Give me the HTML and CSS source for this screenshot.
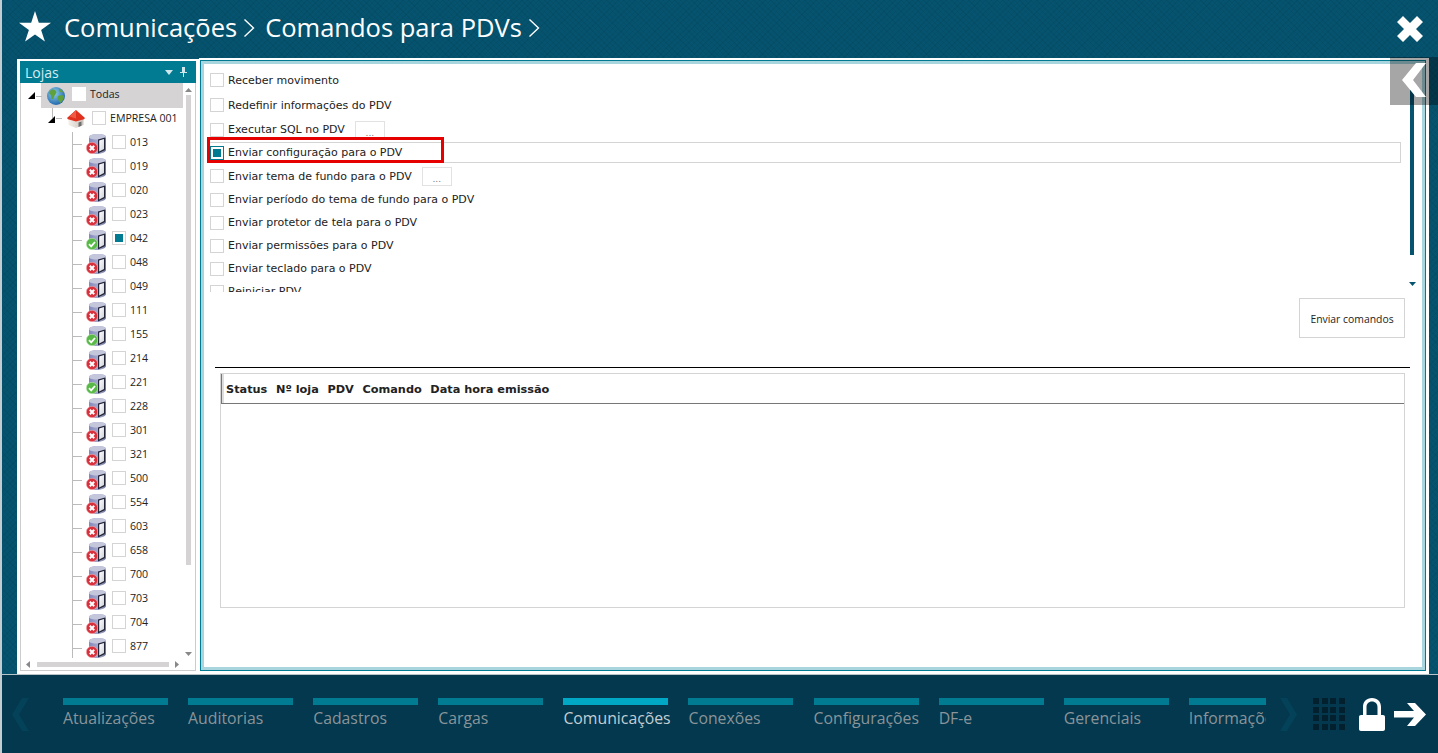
FILE: index.html
```html
<!DOCTYPE html>
<html lang="pt-BR">
<head>
  <meta charset="UTF-8">
  <title>Comandos para PDVs</title>
  <link rel="stylesheet" href="styles.css">
</head>
<body>
  <svg class="defs" width="0" height="0">
    <defs>
      <linearGradient id="srv" x1="0" x2="1" y1="0" y2="0">
        <stop offset="0" stop-color="#8388bd"/>
        <stop offset="0.6" stop-color="#a9add0"/>
        <stop offset="1" stop-color="#6d7296"/>
      </linearGradient>
      <linearGradient id="srv-front" x1="0" x2="1" y1="0" y2="1">
        <stop offset="0" stop-color="#fff"/>
        <stop offset="1" stop-color="#cfd2d8"/>
      </linearGradient>
      <linearGradient id="wall" x1="0" x2="1" y1="0" y2="0">
        <stop offset="0" stop-color="#f4efe9"/>
        <stop offset="1" stop-color="#c9c4be"/>
      </linearGradient>
      <radialGradient id="globe" cx="0.4" cy="0.35" r="0.7">
        <stop offset="0" stop-color="#8fd0ee"/>
        <stop offset="1" stop-color="#1c62a8"/>
      </radialGradient>
      <symbol id="server" viewBox="0 0 20 20">
        <path d="M3 3c0-2 5-3 9-3s8 1 8 3v13c0 2-5 4-9 4s-8-2-8-4z" fill="url(#srv)"/>
        <path d="M3 3c0-2 5-3 9-3s8 1 8 3c0 1-3 2-8 2.500S3 4.500 3 3z" fill="#c4c7dc"/>
        <path d="M12 5.500l7-2V16l-7 3.500z" fill="#23263a"/>
        <path d="M13.200 6.500l4.800-1.400V15l-4.800 2.500z" fill="url(#srv-front)"/>
      </symbol>
      <symbol id="bad" viewBox="0 0 12 12">
        <circle cx="6" cy="6" r="5.700" fill="#d8303c" stroke="#f4b0b0" stroke-width="0.6"/>
        <path d="M3.800 3.800l4.400 4.400M8.200 3.800l-4.400 4.400" stroke="#fff" stroke-width="2"/>
      </symbol>
      <symbol id="good" viewBox="0 0 12 12">
        <circle cx="6" cy="6" r="5.700" fill="#58b848" stroke="#bfe6b0" stroke-width="0.6"/>
        <path d="M3 6.200l2.200 2.200 3.800-4.400" stroke="#fff" stroke-width="1.800" fill="none"/>
      </symbol>
    </defs>
  </svg>

  <!-- Header -->
  <header class="header">
    <svg class="star" viewBox="0 0 32 32"><path d="M16 0l3.800 11.700H32l-9.900 7.200 3.800 11.700L16 23.400 6.100 30.600l3.800-11.700L0 11.700h12.200z" fill="#fff"/></svg>
    <span class="crumb">Comunicações</span>
    <svg class="crumb-sep" viewBox="0 0 12 20"><path d="M1.500 1.500L10.500 10 1.500 18.500" fill="none" stroke="#fff" stroke-width="1.400"/></svg>
    <span class="crumb">Comandos para PDVs</span>
    <svg class="crumb-sep" viewBox="0 0 12 20"><path d="M1.500 1.500L10.500 10 1.500 18.500" fill="none" stroke="#fff" stroke-width="1.400"/></svg>
    <svg class="close" viewBox="0 0 26 26"><path d="M6 0l7 7 7-7 6 6-7 7 7 7-6 6-7-7-7 7-6-6 7-7-7-7z" fill="#fff"/></svg>
  </header>

  <!-- Main -->
  <main class="main">
    <aside class="side">
      <div class="side-inner">
        <div class="side-title">
          <span>Lojas</span>
          <span class="side-tools">
            <svg width="8" height="5" viewBox="0 0 8 5"><path d="M0 0h8L4 5z" fill="#cfe6ec"/></svg>
            <svg width="7" height="10" viewBox="0 0 7 10"><path d="M2 0h3v5h2v1H4v4H3V6H0V5h2z" fill="#cfe6ec"/></svg>
          </span>
        </div>
        <div class="tree-wrap">
          <div class="tree">
            <div class="node root">
              <span class="tri"></span>
              <span class="root-bg">
                <svg class="globe" viewBox="0 0 18 18"><circle cx="9" cy="9" r="9" fill="url(#globe)"/><path d="M4 3c2-1 4 0 5 1s0 3-1 4-1 3-2 4-2-1-2-3-2-2-2-3 1-2 2-3zM11 9c2-1 5-1 6 0 0 3-2 6-4 7-1-2-3-5-2-7zM12 2c2 0 3 1 4 3-1 1-3 0-4-1z" fill="#5fa23c"/></svg>
                <span class="cb plain"></span>
                <span class="label">Todas</span>
              </span>
            </div>
            <div class="node company">
              <span class="tri"></span>
              <svg class="house" viewBox="0 0 18 18"><path d="M1.500 8v7L9 18l7.500-3V8z" fill="url(#wall)"/><path d="M11.500 12.500l3-1v4.300l-3 1.200z" fill="#6f6f6f"/><path d="M9 0L0 8l1 1.200 8 2.300 8-2.300L18 8z" fill="#e0301e"/><path d="M9 0L2.500 6.500 9 8.500z" fill="#ee5a44"/></svg>
              <span class="cb"></span>
              <span class="label">EMPRESA 001</span>
            </div>
            <div class="stores">
              <div class="node store"><svg class="srv"><use href="#server"/></svg><svg class="st"><use href="#bad"/></svg><span class="cb"></span><span class="label">013</span></div>
              <div class="node store"><svg class="srv"><use href="#server"/></svg><svg class="st"><use href="#bad"/></svg><span class="cb"></span><span class="label">019</span></div>
              <div class="node store"><svg class="srv"><use href="#server"/></svg><svg class="st"><use href="#bad"/></svg><span class="cb"></span><span class="label">020</span></div>
              <div class="node store"><svg class="srv"><use href="#server"/></svg><svg class="st"><use href="#bad"/></svg><span class="cb"></span><span class="label">023</span></div>
              <div class="node store"><svg class="srv"><use href="#server"/></svg><svg class="st"><use href="#good"/></svg><span class="cb on"></span><span class="label">042</span></div>
              <div class="node store"><svg class="srv"><use href="#server"/></svg><svg class="st"><use href="#bad"/></svg><span class="cb"></span><span class="label">048</span></div>
              <div class="node store"><svg class="srv"><use href="#server"/></svg><svg class="st"><use href="#bad"/></svg><span class="cb"></span><span class="label">049</span></div>
              <div class="node store"><svg class="srv"><use href="#server"/></svg><svg class="st"><use href="#bad"/></svg><span class="cb"></span><span class="label">111</span></div>
              <div class="node store"><svg class="srv"><use href="#server"/></svg><svg class="st"><use href="#good"/></svg><span class="cb"></span><span class="label">155</span></div>
              <div class="node store"><svg class="srv"><use href="#server"/></svg><svg class="st"><use href="#bad"/></svg><span class="cb"></span><span class="label">214</span></div>
              <div class="node store"><svg class="srv"><use href="#server"/></svg><svg class="st"><use href="#good"/></svg><span class="cb"></span><span class="label">221</span></div>
              <div class="node store"><svg class="srv"><use href="#server"/></svg><svg class="st"><use href="#bad"/></svg><span class="cb"></span><span class="label">228</span></div>
              <div class="node store"><svg class="srv"><use href="#server"/></svg><svg class="st"><use href="#bad"/></svg><span class="cb"></span><span class="label">301</span></div>
              <div class="node store"><svg class="srv"><use href="#server"/></svg><svg class="st"><use href="#bad"/></svg><span class="cb"></span><span class="label">321</span></div>
              <div class="node store"><svg class="srv"><use href="#server"/></svg><svg class="st"><use href="#bad"/></svg><span class="cb"></span><span class="label">500</span></div>
              <div class="node store"><svg class="srv"><use href="#server"/></svg><svg class="st"><use href="#bad"/></svg><span class="cb"></span><span class="label">554</span></div>
              <div class="node store"><svg class="srv"><use href="#server"/></svg><svg class="st"><use href="#bad"/></svg><span class="cb"></span><span class="label">603</span></div>
              <div class="node store"><svg class="srv"><use href="#server"/></svg><svg class="st"><use href="#bad"/></svg><span class="cb"></span><span class="label">658</span></div>
              <div class="node store"><svg class="srv"><use href="#server"/></svg><svg class="st"><use href="#bad"/></svg><span class="cb"></span><span class="label">700</span></div>
              <div class="node store"><svg class="srv"><use href="#server"/></svg><svg class="st"><use href="#bad"/></svg><span class="cb"></span><span class="label">703</span></div>
              <div class="node store"><svg class="srv"><use href="#server"/></svg><svg class="st"><use href="#bad"/></svg><span class="cb"></span><span class="label">704</span></div>
              <div class="node store"><svg class="srv"><use href="#server"/></svg><svg class="st"><use href="#bad"/></svg><span class="cb"></span><span class="label">877</span></div>
            </div>
          </div>
          <div class="vscroll">
            <svg width="7" height="4" viewBox="0 0 7 4"><path d="M0 4h7L3.500 0z" fill="#888"/></svg>
            <div class="vthumb"></div>
            <svg width="7" height="4" viewBox="0 0 7 4"><path d="M0 0h7L3.500 4z" fill="#888"/></svg>
          </div>
        </div>
        <div class="hscroll">
          <svg width="4" height="7" viewBox="0 0 4 7"><path d="M4 0v7L0 3.500z" fill="#888"/></svg>
          <div class="hthumb"></div>
          <svg width="4" height="7" viewBox="0 0 4 7"><path d="M0 0v7l4-3.500z" fill="#888"/></svg>
        </div>
      </div>
    </aside>

    <section class="content">
      <div class="content-inner">
        <div class="commands-wrap">
          <div class="commands">
            <div class="cmd h24"><span class="cb"></span><span>Receber movimento</span></div>
            <div class="cmd h26"><span class="cb"></span><span>Redefinir informações do PDV</span></div>
            <div class="cmd"><span class="cb"></span><span>Executar SQL no PDV</span><button class="dots dots-sql">...</button></div>
            <div class="cmd focused"><span class="cb on"></span><span>Enviar configuração para o PDV</span></div>
            <div class="cmd h24"><span class="cb"></span><span>Enviar tema de fundo para o PDV</span><button class="dots">...</button></div>
            <div class="cmd"><span class="cb"></span><span>Enviar período do tema de fundo para o PDV</span></div>
            <div class="cmd"><span class="cb"></span><span>Enviar protetor de tela para o PDV</span></div>
            <div class="cmd"><span class="cb"></span><span>Enviar permissões para o PDV</span></div>
            <div class="cmd"><span class="cb"></span><span>Enviar teclado para o PDV</span></div>
            <div class="cmd"><span class="cb"></span><span>Reiniciar PDV</span></div>
          </div>
          <div class="cmd-scroll">
            <div class="cmd-thumb"></div>
            <svg width="7" height="4" viewBox="0 0 7 4"><path d="M0 0h7L3.500 4z" fill="#05536f"/></svg>
          </div>
        </div>
        <div class="send-row"><button class="send">Enviar comandos</button></div>
        <hr class="rule">
        <div class="grid">
          <div class="grid-head">
            <span>Status</span><span>Nº loja</span><span>PDV</span><span>Comando</span><span>Data hora emissão</span>
          </div>
        </div>
      </div>
    </section>

    <!-- Collapse tab over the corner -->
    <button class="collapse">
      <svg viewBox="0 0 26 34"><path d="M25 0h-10L1 17l14 17h10L12 17z" fill="#fff"/></svg>
    </button>
    <!-- Annotation -->
    <div class="highlight"></div>
  </main>

  <!-- Bottom menu -->
  <footer class="footer">
    <svg class="nav-arrow" viewBox="0 0 17 33"><path d="M17 0H10L0 16.500 10 33h7L7 16.500z" fill="#044259"/></svg>
    <nav class="menu">
      <a class="menu-item">Atualizações</a>
      <a class="menu-item">Auditorias</a>
      <a class="menu-item">Cadastros</a>
      <a class="menu-item">Cargas</a>
      <a class="menu-item active">Comunicações</a>
      <a class="menu-item">Conexões</a>
      <a class="menu-item">Configurações</a>
      <a class="menu-item">DF-e</a>
      <a class="menu-item">Gerenciais</a>
      <a class="menu-item">Informações</a>
    </nav>
    <svg class="nav-arrow next" viewBox="0 0 17 33"><path d="M0 0h7l10 16.500L7 33H0l10-16.500z" fill="#044259"/></svg>
    <div class="apps">
      <i></i><i></i><i></i><i></i><i></i><i></i><i></i><i></i><i></i><i></i><i></i><i></i><i></i><i></i><i></i><i></i>
    </div>
    <svg class="lock" viewBox="0 0 26 33"><path d="M13 0c5.500 0 9 3.500 9 9v8h2c1.200 0 2 .8 2 2v12c0 1.200-.8 2-2 2H2c-1.200 0-2-.8-2-2V19c0-1.200.8-2 2-2h2V9c0-5.500 3.500-9 9-9zm0 3.500c-3.300 0-5.500 2.200-5.500 5.800V17h11V9.300c0-3.600-2.200-5.800-5.500-5.800z" fill="#fff"/></svg>
    <svg class="exit" viewBox="0 0 32 23"><path d="M0 8h20l-7-8h8l11 11.500L21 23h-8l7-8.500H0z" fill="#fff"/></svg>
  </footer>
</body>
</html>
```

FILE: styles.css
```css
/* Base */
* {
  margin: 0;
  padding: 0;
  box-sizing: border-box;
}

html, body {
  height: 100%;
}

body {
  display: flex;
  flex-direction: column;
  height: 753px;
  overflow: hidden;
  border-left: 2px solid #c3cdd1;
  background-color: #05536f;
  font-family: "Open Sans", sans-serif;
  color: #222;
}

.defs {
  position: absolute;
}

/* Header */
.header {
  display: flex;
  align-items: center;
  height: 58px;
  padding: 0 15px 4px 17px;
  flex: none;
  color: #fff;
  background-color: #05536f;
  background-image: repeating-linear-gradient(45deg, rgba(0,0,0,.05) 0 1px, transparent 1px 4px), repeating-linear-gradient(-45deg, rgba(0,0,0,.05) 0 1px, transparent 1px 4px);
}

.star {
  width: 32px;
  height: 32px;
  margin-right: 13px;
}

.crumb {
  font-size: 25.500px;
}

.crumb-sep {
  width: 12px;
  height: 20px;
  margin: 2px 10px 0 6px;
}

.close {
  width: 26px;
  height: 26px;
  margin-left: auto;
  margin-top: 3px;
}

/* Main */
.main {
  position: relative;
  display: flex;
  height: 616px;
  flex: none;
  padding-left: 15px;
  background-color: #05536f;
  background-image: repeating-linear-gradient(45deg, rgba(0,0,0,.05) 0 1px, transparent 1px 4px), repeating-linear-gradient(-45deg, rgba(0,0,0,.05) 0 1px, transparent 1px 4px);
}

.side {
  width: 182px;
  margin-top: 1px;
  padding: 2px 3px 3px 3px;
  background-color: #fff;
}

.side-inner {
  display: flex;
  flex-direction: column;
  height: 100%;
  border: 1px solid #ccc;
  border-top: none;
}

.side-title {
  display: flex;
  align-items: center;
  justify-content: space-between;
  height: 22px;
  margin: 0 -1px;
  padding: 0 9px 0 5px;
  font-size: 14px;
  color: #d7ecf1;
  background-color: #007b92;
  flex: none;
}

.side-tools {
  display: flex;
  align-items: center;
  gap: 7px;
}

.tree-wrap {
  display: flex;
  flex: 1;
  min-height: 0;
}

.tree {
  flex: 1;
  min-width: 0;
  overflow: hidden;
  font-size: 10.600px;
  color: #222;
}

.node {
  position: relative;
  display: flex;
  align-items: center;
  height: 24px;
}

.tri {
  width: 0;
  height: 0;
  border-style: solid;
  border-width: 0 0 7px 7px;
  border-color: transparent transparent #000 transparent;
}

/* Tree rows */
.root {
  height: 23px;
  padding-left: 7px;
}

.root .tri {
  margin-top: 2px;
}

.root-bg {
  display: flex;
  align-items: center;
  align-self: flex-start;
  width: 142px;
  height: 25px;
  margin-left: 6px;
  padding-left: 6px;
  background-color: #d5d3d4;
}

.root-bg .cb,
.root-bg .label {
  margin-bottom: 3px;
}

.root::before {
  content: '';
  position: absolute;
  left: 15px;
  top: 13px;
  width: 6px;
  border-top: 1px solid #bbb;
}

.globe {
  width: 18px;
  height: 18px;
  margin-right: 7px;
}

.company {
  padding-left: 27px;
}

.company::before {
  content: '';
  position: absolute;
  left: 31px;
  top: 2px;
  height: 10px;
  border-left: 1px solid #bbb;
}

.company::after {
  content: '';
  position: absolute;
  left: 35px;
  top: 12px;
  width: 6px;
  border-top: 1px solid #bbb;
}

.company .tri {
  margin-top: 3px;
}

.house {
  width: 18px;
  height: 18px;
  margin: 2px 7px 0 12px;
}

.stores {
  position: relative;
}

.stores::before {
  content: '';
  position: absolute;
  left: 51px;
  top: 2px;
  bottom: 0;
  border-left: 1px solid #bbb;
}

.store {
  padding-left: 65px;
}

.store::before {
  content: '';
  position: absolute;
  left: 51px;
  top: 14px;
  width: 10px;
  border-top: 1px solid #bbb;
}

.srv {
  width: 20px;
  height: 20px;
  margin-top: 3px;
  margin-right: 6px;
}

.st {
  position: absolute;
  left: 65px;
  top: 12px;
  width: 12px;
  height: 12px;
}

.cb {
  display: block;
  flex: none;
  width: 14px;
  height: 14px;
  border: 1px solid #d4d4d4;
  background-color: #fff;
  margin-right: 4px;
}

.cb.plain {
  border-color: #fff;
}

.cb.on {
  border-color: #007b92;
  box-shadow: inset 0 0 0 2px #fff;
  background-color: #007b92;
}

.store .cb.on {
  border-color: #d4d4d4;
}

.label {
  white-space: nowrap;
}

/* Tree scrollbars */
.vscroll {
  display: flex;
  flex-direction: column;
  align-items: center;
  width: 11px;
  margin: 5px 1px 0 0;
  gap: 3px;
  padding-bottom: 2px;
}

.vthumb {
  width: 5px;
  height: 470px;
  background-color: #d5d3d4;
  margin-bottom: auto;
}

.hscroll {
  display: flex;
  align-items: center;
  justify-content: space-between;
  height: 12px;
  padding: 0 16px 0 5px;
  flex: none;
}

.hthumb {
  width: 132px;
  height: 5px;
  background-color: #d5d3d4;
}

/* Right panel */
.content {
  width: 1230px;
  padding: 2px 3px 3px 1px;
  background-color: #fff;
}

.content-inner {
  height: 611px;
  border: 1px solid #007b92;
  outline: 3px solid #a8d5de;
  outline-offset: -4px;
  padding: 3px 0 0 6px;
  background-color: #fff;
  font-family: "DejaVu Sans", sans-serif;
}

.commands-wrap {
  display: flex;
  height: 228px;
}

.commands {
  flex: 1;
  min-width: 0;
  overflow: hidden;
  padding-top: 4px;
  font-size: 11px;
  color: #222;
}

.cmd {
  display: flex;
  align-items: center;
  height: 23px;
  padding-left: 3px;
  margin-right: 5px;
}

.cmd.h24 {
  height: 24px;
}

.cmd.h26 {
  height: 26px;
}

.cmd.focused {
  height: 21px;
  margin: 1px 5px 1px 0;
  border: 1px solid #d4d4d4;
  padding-left: 2px;
}

.dots {
  width: 30px;
  height: 19px;
  margin-left: 10px;
  border: 1px solid #e2e2e2;
  background-color: #fff;
  font: 9px "DejaVu Sans", sans-serif;
  color: #777;
  padding-top: 6px;
}

.dots-sql {
  height: 18px;
}

.cmd-scroll {
  display: flex;
  flex-direction: column;
  align-items: center;
  justify-content: flex-end;
  width: 12px;
  margin-right: 7px;
  gap: 27px;
  padding-bottom: 6px;
}

.cmd-thumb {
  width: 4px;
  height: 165px;
  background-color: #05536f;
}

.send-row {
  display: flex;
  justify-content: flex-end;
  padding: 6px 20px 0 0;
}

.send {
  width: 106px;
  height: 40px;
  padding-top: 2px;
  border: 1px solid #d4d4d4;
  background-color: #fff;
  font: 10.400px "Open Sans", sans-serif;
  color: #222;
}

.rule {
  height: 1px;
  margin: 29px 15px 0 8px;
  border: none;
  background-color: #000;
}

.grid {
  height: 235px;
  margin: 5px 20px 0 13px;
  border: 1px solid #d4d4d4;
}

.grid-head {
  display: flex;
  align-items: center;
  gap: 8.600px;
  height: 30px;
  padding: 2px 0 0 4px;
  border-left: 1px solid #777;
  border-bottom: 1px solid #777;
  font-size: 11.300px;
  font-weight: bold;
  color: #222;
  box-shadow: inset 2px 0 0 #ddd;
}

/* Overlays */
.collapse {
  position: absolute;
  right: 0;
  top: -1px;
  width: 48px;
  height: 48px;
  border: none;
  background-color: rgba(0, 0, 0, .35);
  display: flex;
}

.collapse svg {
  width: 26px;
  height: 34px;
  margin: 6px 0 0 11px;
}

.highlight {
  position: absolute;
  left: 205px;
  top: 79px;
  width: 237px;
  height: 26px;
  border: 3px solid #e60000;
}

/* Footer */
.footer {
  display: flex;
  align-items: flex-start;
  height: 79px;
  flex: none;
  padding: 23px 0 0 10px;
  background-color: #03384e;
  border-top: 1px solid #b9c4c9;
}

.nav-arrow {
  width: 17px;
  height: 33px;
  flex: none;
}

.menu {
  display: flex;
  gap: 20.100px;
  width: 1203px;
  margin-left: 34px;
  overflow: hidden;
}

.menu-item {
  flex: none;
  width: 105px;
  padding-top: 2px;
  border-top: 7px solid #007b92;
  font-size: 15.800px;
  color: #8a9499;
  white-space: nowrap;
}

.menu-item.active {
  border-top-color: #00a8c6;
  color: #c4ced2;
}

.next {
  margin-left: 14px;
}

.apps {
  display: grid;
  grid-template-columns: repeat(4, 6px);
  grid-auto-rows: 6px;
  gap: 2.670px;
  margin-left: 16px;
  flex: none;
}

.apps i {
  background-color: #02202e;
}

.lock {
  width: 26px;
  height: 33px;
  margin-left: 14px;
  flex: none;
}

.exit {
  width: 32px;
  height: 23px;
  margin: 5px 0 0 9px;
  flex: none;
}
```
